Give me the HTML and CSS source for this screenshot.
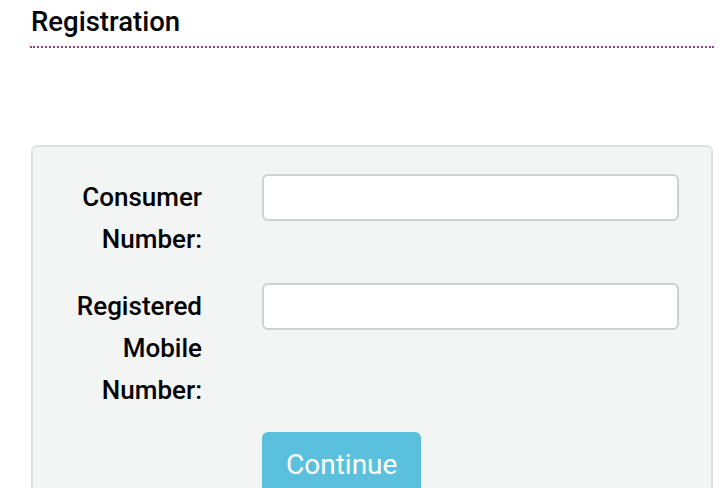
FILE: index.html
```html
<!DOCTYPE html>
<html>
<head>
<meta charset="utf-8">
<link rel="stylesheet" href="styles.css">
</head>
<body>
<div class="page">
  <h1 class="title">Registration</h1>
  <div class="panel">
    <div class="row">
      <label class="label" for="cn">Consumer Number:</label>
      <div class="field"><input id="cn" class="input" type="text"></div>
    </div>
    <div class="row">
      <label class="label" for="mn">Registered Mobile Number:</label>
      <div class="field"><input id="mn" class="input" type="text"></div>
    </div>
    <div class="row">
      <div class="label"></div>
      <div class="field"><button class="btn">Continue</button></div>
    </div>
  </div>
</div>
</body>
</html>
```
FILE: styles.css
```css
html, body { margin: 0; padding: 0; background: #fff; }
body { font-family: Roboto, "Noto Sans", sans-serif; color: #000; }
.page { padding: 0 5px 0 30px; }
.title {
  margin: 0;
  padding: 7px 0 0 1px;
  font-size: 27.5px;
  font-weight: 500;
  line-height: 30px;
  height: 39px;
  border-bottom: 2px dotted #9b3d93;
}
.panel {
  margin-top: 97px;
  margin-left: 1px;
  margin-right: 1px;
  background: #f3f5f5;
  border: 2px solid #dfe1e1;
  border-radius: 6px;
  padding: 27px 32px 40px 0;
  height: 400px;
}
.row { display: flex; gap: 60px; margin-bottom: 23px; }
.row:nth-child(2) { margin-bottom: 21px; }
.label {
  width: 169px;
  flex: none;
  text-align: right;
  font-size: 26px;
  font-weight: 500;
  line-height: 42px;
  margin-top: 2px;
}
.field { flex: 1; }
.input {
  display: block;
  box-sizing: border-box;
  width: 100%;
  height: 47px;
  border: 2px solid #cfd0d0;
  border-radius: 6px;
  background: #fff;
  font-size: 20px;
}
.btn {
  background: #5bc0de;
  color: #fff;
  border: 0;
  border-radius: 6px;
  font-family: Roboto, sans-serif;
  font-size: 28px;
  padding: 18px 24px;
  line-height: 30px;
}
```
